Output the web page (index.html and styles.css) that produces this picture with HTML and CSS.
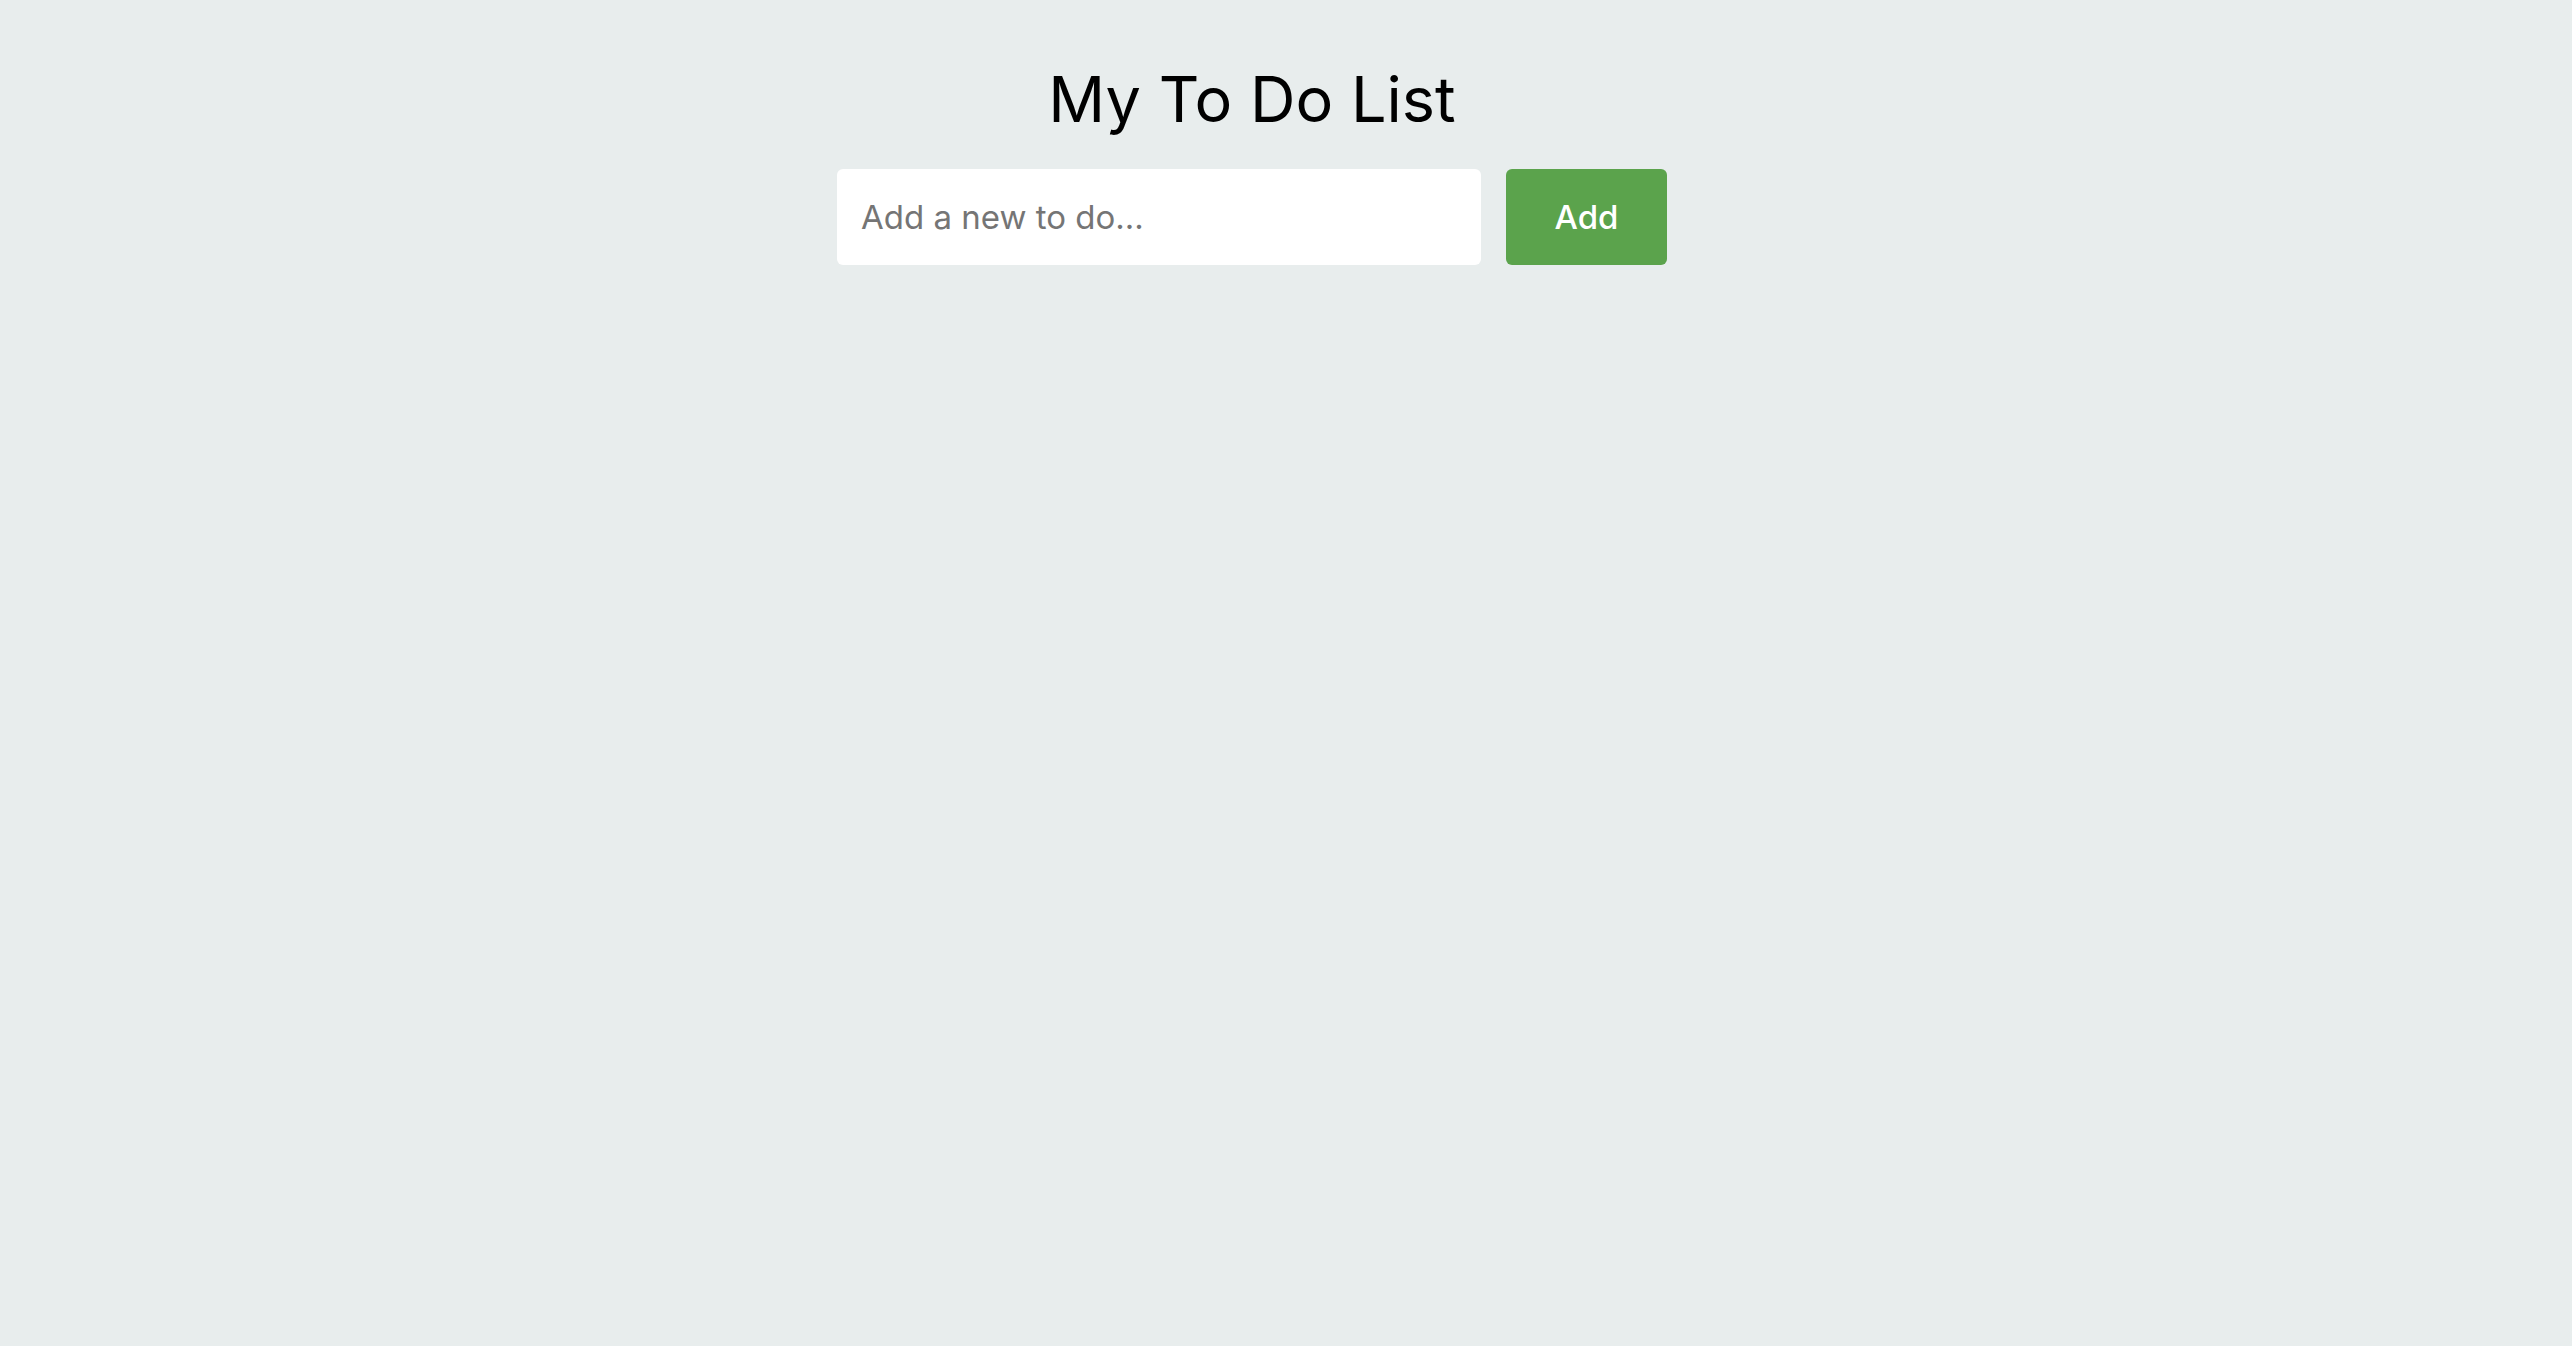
FILE: index.html
```html
<!DOCTYPE html>
<html>

<head>
    <title>My To Do List</title>
    <link rel="stylesheet" href="styles.css">
</head>

<body>
    <div id="app">
        <h1 id="title">My To Do List</h1>
        <form id="new-todo" onsubmit="return false;">
            <input type="text" id="todo-input" placeholder="Add a new to do..." />
            <button type="submit" class="add-button">Add</button>
        </form>
        <ul id="todo-list"></ul>
    </div>
</body>

</html>
```

FILE: styles.css
```css
body {
    margin: 0;
    background-color: #e8eded;
    font-family: Inter, "Noto Sans", sans-serif;
    min-height: 100vh;
}

#app {
    display: flex;
    flex-direction: column;
    align-items: center;
    padding-right: 68px;
}

#title {
    font-size: 63px;
    font-weight: 400;
    color: #000;
    margin: 58px 0 29px 0;
    line-height: 82px;
}

#new-todo {
    display: flex;
    gap: 25px;
}

#todo-input {
    width: 644px;
    height: 96px;
    box-sizing: border-box;
    border: none;
    border-radius: 6px;
    background-color: #fff;
    padding: 0 24px;
    font-family: Inter, "Noto Sans", sans-serif;
    font-size: 33px;
    color: #333;
}

#todo-input::placeholder {
    color: #757575;
}

.add-button {
    width: 161px;
    height: 96px;
    border: none;
    border-radius: 6px;
    background-color: #5ba34c;
    color: #fff;
    font-family: Inter, "Noto Sans", sans-serif;
    font-size: 33px;
    font-weight: 500;
}

#todo-list {
    list-style: none;
    padding: 0;
    margin: 0;
}
```
